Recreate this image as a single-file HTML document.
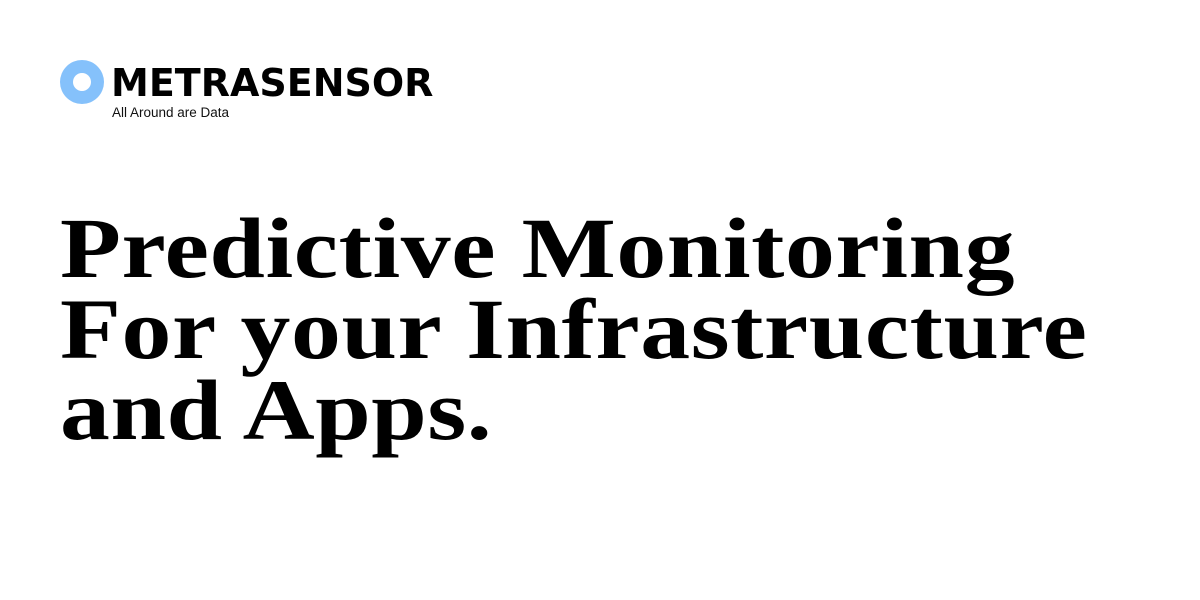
<!DOCTYPE html>
<html><head><style>
body{margin:0;width:1200px;height:600px;background:#fff;position:relative;overflow:hidden}
.c{position:absolute;left:60px;top:60px;width:44px;height:44px;border-radius:50%;background:#85c1fb}
.c:after{content:"";position:absolute;left:13px;top:13px;width:18px;height:18px;border-radius:50%;background:#fff}
.logo{position:absolute;left:111px;top:60px;font:bold 38px "DejaVu Sans","Liberation Sans",sans-serif;color:#000;line-height:46px}
.tag{position:absolute;left:112px;top:105px;font:13.5px "Liberation Sans",sans-serif;color:#111}
h1{position:absolute;left:60px;top:208px;margin:0;font:bold 86px/81px "Liberation Serif",serif;color:#000;letter-spacing:0.5px;transform:scaleX(1.16);transform-origin:0 0;white-space:nowrap}
</style></head><body>
<div class="c"></div>
<div class="logo">METRASENSOR</div>
<div class="tag">All Around are Data</div>
<h1>Predictive Monitoring<br>For your Infrastructure<br>and Apps.</h1>
</body></html>
